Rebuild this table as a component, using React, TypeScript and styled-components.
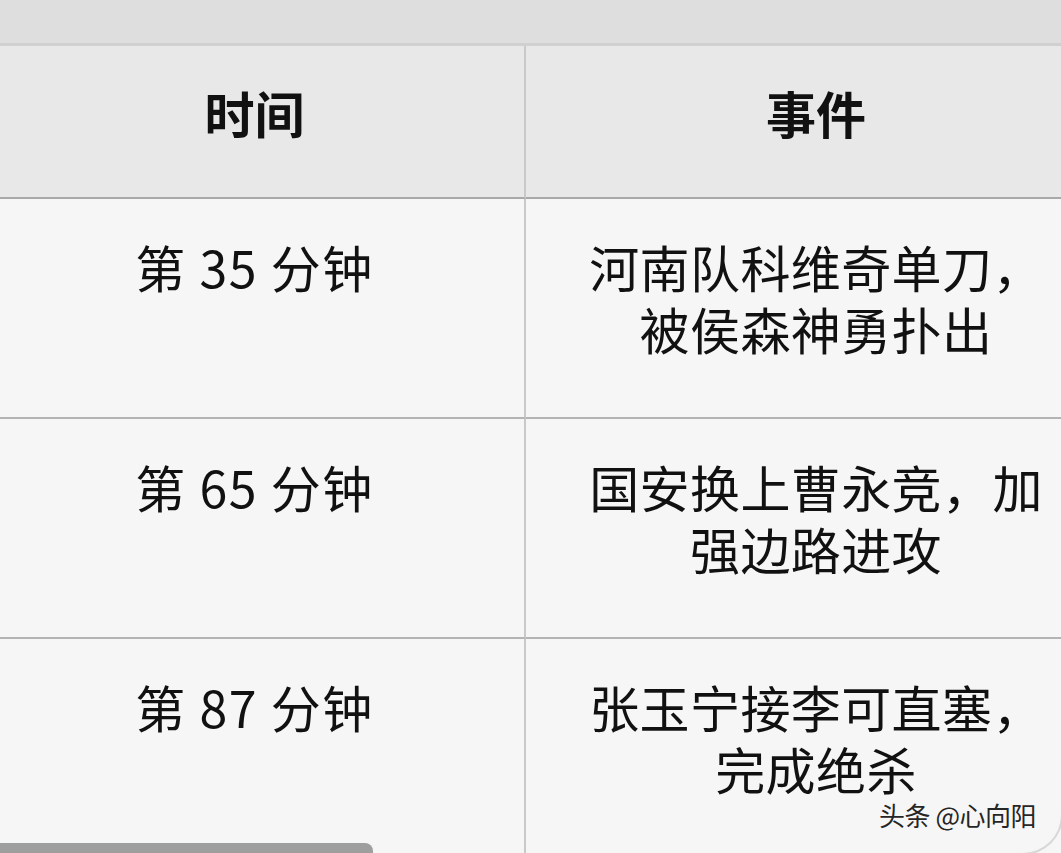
import React from "react";
import styled, { createGlobalStyle } from "styled-components";

const GlobalStyle = createGlobalStyle`
  html, body {
    margin: 0;
    padding: 0;
    background: #f6f6f6;
    overflow: hidden;
  }
  * { box-sizing: border-box; }
`;

const Page = styled.div`
  position: relative;
  width: 1061px;
  height: 853px;
  overflow: hidden;
  background: #f6f6f6;
  font-family: "Noto Sans CJK SC", "Noto Sans", sans-serif;
  color: #111;
`;

const TopBar = styled.div`
  height: 46px;
  background: #dedede;
  border-bottom: 3px solid #d0d0d0;
`;

const Table = styled.div`
  display: grid;
  grid-template-columns: 541px 580px;
  margin-left: -15px;
  width: 1121px;
`;

const HeaderCell = styled.div<{ $first?: boolean }>`
  height: 153px;
  background: #e8e8e8;
  border-bottom: 2px solid #a9a9a9;
  border-right: ${(p) => (p.$first ? "2px solid #c9c9c9" : "none")};
  display: flex;
  align-items: center;
  justify-content: center;
  font-size: 50px;
  font-weight: 700;
  padding-bottom: 19px;
`;

const BodyCell = styled.div<{ $first?: boolean; $last?: boolean }>`
  height: ${(p) => (p.$last ? "260px" : "220px")};
  background: #f6f6f6;
  border-bottom: ${(p) => (p.$last ? "none" : "2px solid #b4b4b4")};
  border-right: ${(p) => (p.$first ? "2px solid #c9c9c9" : "none")};
  padding: 36px 48px 0;
  font-size: 50px;
  line-height: 62px;
  text-align: center;
  letter-spacing: ${(p) => (p.$first ? "1.5px" : "0.4px")};
`;

const Watermark = styled.div`
  position: absolute;
  right: 25px;
  bottom: 24px;
  font-size: 26px;
  line-height: 28px;
  letter-spacing: -0.5px;
  color: #262626;
  text-shadow: 0 0 1px #fff;
`;

const ScrollThumb = styled.div`
  position: absolute;
  left: 0;
  bottom: 0;
  width: 373px;
  height: 10px;
  background: #9e9e9e;
  border-top-right-radius: 8px;
`;

const Corner = styled.div`
  position: absolute;
  right: -2px;
  bottom: -2px;
  width: 40px;
  height: 40px;
  border-right: 2px solid #d8d8d8;
  border-bottom: 2px solid #d8d8d8;
  border-bottom-right-radius: 40px;
`;

const rows = [
  { time: "第 35 分钟", event: "河南队科维奇单刀，被侯森神勇扑出" },
  { time: "第 65 分钟", event: "国安换上曹永竞，加强边路进攻" },
  { time: "第 87 分钟", event: "张玉宁接李可直塞，完成绝杀" },
];

export default function App() {
  return (
    <>
      <GlobalStyle />
      <Page>
        <TopBar />
        <Table>
          <HeaderCell $first>时间</HeaderCell>
          <HeaderCell>事件</HeaderCell>
          {rows.map((r, i) => (
            <React.Fragment key={r.time}>
              <BodyCell $first $last={i === rows.length - 1}>
                {r.time}
              </BodyCell>
              <BodyCell $last={i === rows.length - 1}>{r.event}</BodyCell>
            </React.Fragment>
          ))}
        </Table>
        <Watermark>头条 @心向阳</Watermark>
        <ScrollThumb />
        <Corner />
      </Page>
    </>
  );
}
